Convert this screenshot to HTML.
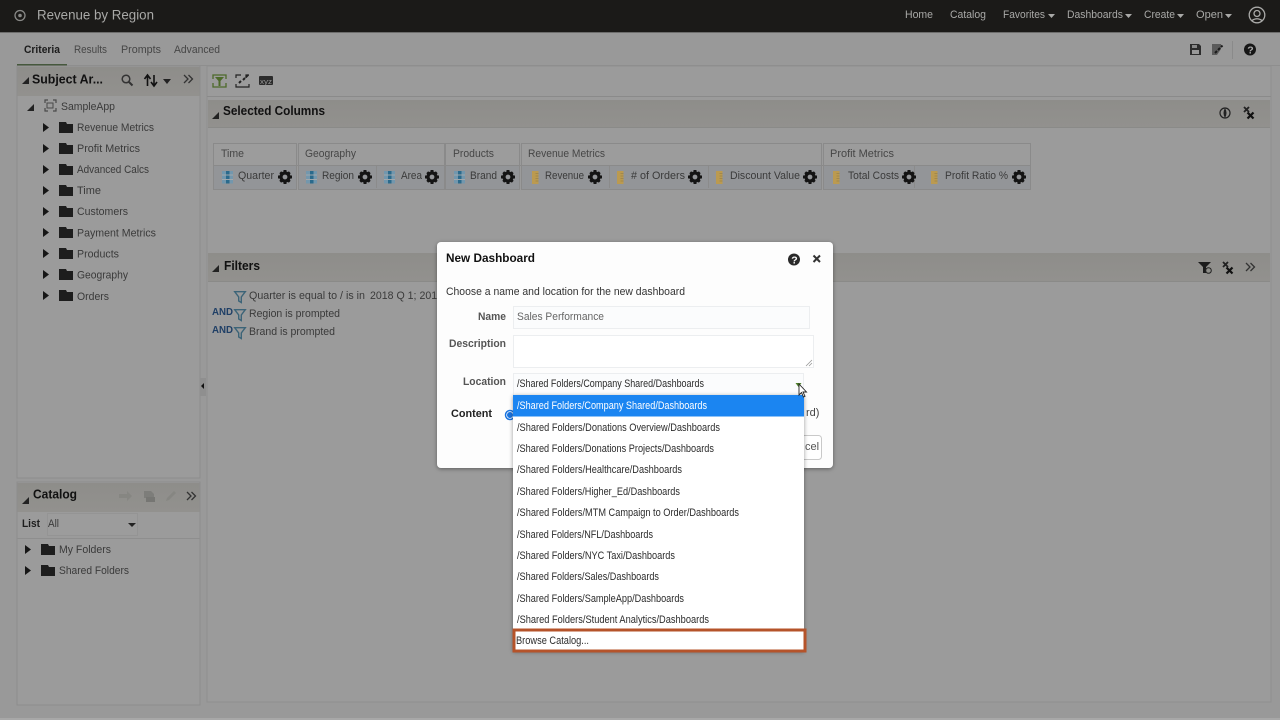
<!DOCTYPE html>
<html><head><meta charset="utf-8"><title>Revenue by Region</title>
<style>
html,body{margin:0;padding:0;width:1280px;height:720px;overflow:hidden;background:#999}
svg{display:block}
text{font-family:"Liberation Sans",sans-serif;font-size:11px;fill:#3a3a3a}
.b{font-weight:bold}
.t{fill:#3a3a3a}
.g{fill:#464646}
.h{fill:#a9a9a7}
.d{fill:#111;font-weight:bold;font-size:13px}
.m{fill:#2c2c2c;font-size:10.8px}
</style></head><body>
<svg width="1280" height="720" viewBox="0 0 1280 720" xmlns="http://www.w3.org/2000/svg">
<defs>
<linearGradient id="ph" x1="0" y1="0" x2="0" y2="1"><stop offset="0" stop-color="#8e8d8a"/><stop offset="1" stop-color="#92918e"/></linearGradient>
<g id="folder"><path d="M0 1h7l1 2h6v9H0z" fill="#1d1d1d"/></g>
<g id="tri"><path d="M0 0l6 4.500-6 4.500z" fill="#161616"/></g>
<g id="open"><path d="M7 0v7H0z" fill="#222"/></g>
<g id="gear"><circle cx="0" cy="0" r="4" fill="none" stroke="#141414" stroke-width="3.200"/><path d="M-1.500-7h3v2.500h-3zM-1.500 4.500h3V7h-3zM-7-1.500h2.500v3H-7zM4.500-1.500H7v3H4.500zM-5.700-3.800l1.900-1.900 1.700 1.700-1.900 1.900zM3.800-5.700l1.900 1.900-1.700 1.700-1.900-1.900zM-3.800 5.700l-1.900-1.900 1.700-1.700 1.900 1.900zM5.700 3.800l-1.900 1.900-1.700-1.700 1.900-1.900z" fill="#141414"/></g>
<g id="attr"><rect x="0" y="0" width="11" height="12.500" fill="#7397ad"/><rect x="4" y="0" width="3.500" height="12.500" fill="#2a6a8c"/><path d="M0 4h11M0 8.500h11" stroke="#a0a8ad" stroke-width="1"/></g>
<g id="meas"><rect x="0" y="0" width="6.500" height="13" fill="#bb9a50"/><path d="M3.500 2.500h3M3.500 5h3M3.500 7.500h3M3.500 10h3" stroke="#9a8248" stroke-width=".7"/></g>
<g id="funnel"><path d="M.7.700h10.600L7.300 6v5.500L4.700 10V6z" fill="none" stroke="#3c6478" stroke-width="1.400"/></g>
<g id="xx"><path d="M1 0l5 5M6 0L1 5" stroke="#222" stroke-width="1.800"/><path d="M4.500 5.500l6 6M10.500 5.500l-6 6" stroke="#111" stroke-width="2.200"/></g>
<g id="chev"><path d="M0 0l4 4-4 4M4.500 0l4 4-4 4" fill="none" stroke="#333" stroke-width="1.300"/></g>
<filter id="sh" x="-5%" y="-5%" width="110%" height="110%"><feDropShadow dx="0" dy="1" stdDeviation="2" flood-color="#000" flood-opacity=".4"/></filter>
</defs>

<rect width="1280" height="720" fill="#999"/>
<rect y="718" width="1280" height="2" fill="#a8a8a8"/>
<!-- header -->
<rect width="1280" height="32" fill="#1b1a18"/>
<rect y="32" width="1280" height="1" fill="#6d6d6c"/>
<circle cx="20" cy="15.500" r="5" fill="none" stroke="#8a8a88" stroke-width="1.300"/><circle cx="20" cy="15.500" r="1.800" fill="#8a8a88"/>
<text x="37" y="19.500" class="h" style="font-size:14px" textLength="117" lengthAdjust="spacingAndGlyphs">Revenue by Region</text>
<text x="905" y="18" class="h" textLength="28" lengthAdjust="spacingAndGlyphs">Home</text>
<text x="950" y="18" class="h" textLength="36" lengthAdjust="spacingAndGlyphs">Catalog</text>
<text x="1003" y="18" class="h" textLength="42" lengthAdjust="spacingAndGlyphs">Favorites</text>
<path d="M1048 14h7l-3.500 4z" fill="#a9a9a7"/>
<text x="1067" y="18" class="h" textLength="56" lengthAdjust="spacingAndGlyphs">Dashboards</text>
<path d="M1125 14h7l-3.500 4z" fill="#a9a9a7"/>
<text x="1144" y="18" class="h" textLength="31" lengthAdjust="spacingAndGlyphs">Create</text>
<path d="M1177 14h7l-3.500 4z" fill="#a9a9a7"/>
<text x="1196" y="18" class="h" textLength="27" lengthAdjust="spacingAndGlyphs">Open</text>
<path d="M1225 14h7l-3.500 4z" fill="#a9a9a7"/>
<circle cx="1257" cy="15" r="7.800" fill="none" stroke="#a9a9a7" stroke-width="1.300"/><circle cx="1257" cy="13.500" r="3" fill="none" stroke="#a9a9a7" stroke-width="1.300"/><path d="M1252 20.500q5-3.500 10 0" fill="none" stroke="#a9a9a7" stroke-width="1.300"/>

<!-- tabs -->
<text x="24" y="53" class="b" style="fill:#1c1c1c" textLength="36" lengthAdjust="spacingAndGlyphs">Criteria</text>
<text x="74" y="53" class="g" textLength="33" lengthAdjust="spacingAndGlyphs">Results</text>
<text x="121" y="53" class="g" textLength="40" lengthAdjust="spacingAndGlyphs">Prompts</text>
<text x="174" y="53" class="g" textLength="46" lengthAdjust="spacingAndGlyphs">Advanced</text>
<rect x="17" y="64" width="50" height="2" fill="#46583d"/>
<rect x="67" y="65" width="1213" height="1" fill="#8e8e8e"/>
<!-- top right tools -->
<path d="M1190 44h9l2 2v9h-11z" fill="#2c2c2c"/><rect x="1192" y="45" width="5" height="3" fill="#888"/><rect x="1192" y="50" width="7" height="4" fill="#999"/>
<path d="M1212 44h9v5l-4 6h-5z" fill="#5a5a5a"/><path d="M1215 53l2-2M1218 50l2-2M1221 47l1.500-1.500" stroke="#1a1a1a" stroke-width="2"/>
<rect x="1232" y="41" width="1" height="18" fill="#8a8a8a"/>
<circle cx="1250" cy="49.500" r="6" fill="#161616"/><text x="1247.300" y="53.500" style="font-size:10.500px;fill:#aaa;font-weight:bold">?</text>

<!-- subject areas panel -->
<rect x="17" y="66" width="183" height="412" fill="#9b9b9b" stroke="#8d8d8d"/>
<rect x="17.500" y="67" width="182" height="29" fill="url(#ph)"/>
<use href="#open" x="22" y="77"/>
<text x="32" y="83.500" class="d" textLength="71" lengthAdjust="spacingAndGlyphs">Subject Ar...</text>
<circle cx="126" cy="79" r="3.800" fill="none" stroke="#333" stroke-width="1.500"/><path d="M129 82l3.500 3.500" stroke="#333" stroke-width="2"/>
<path d="M147.500 86V76M144.500 79l3-4 3 4" fill="none" stroke="#111" stroke-width="1.600"/><path d="M154 75v10M151 82l3 4 3-4" fill="none" stroke="#111" stroke-width="1.600"/>
<path d="M163 79h8l-4 5z" fill="#222"/>
<use href="#chev" x="184" y="75"/>

<use href="#open" x="27" y="104"/>
<path d="M48 100h-3v3M53 100h3v3M48 111h-3v-3M53 111h3v-3" fill="none" stroke="#4a4a4a" stroke-width="1.200"/><rect x="47" y="103" width="6" height="5" fill="none" stroke="#4a4a4a"/>
<text x="61" y="110" class="t" textLength="54" lengthAdjust="spacingAndGlyphs">SampleApp</text>
<use href="#tri" x="43" y="123"/><use href="#folder" x="59" y="121"/><text x="77" y="131" class="t" textLength="77" lengthAdjust="spacingAndGlyphs">Revenue Metrics</text>
<use href="#tri" x="43" y="144"/><use href="#folder" x="59" y="142"/><text x="77" y="152" class="t" textLength="63" lengthAdjust="spacingAndGlyphs">Profit Metrics</text>
<use href="#tri" x="43" y="165"/><use href="#folder" x="59" y="163"/><text x="77" y="173" class="t" textLength="72" lengthAdjust="spacingAndGlyphs">Advanced Calcs</text>
<use href="#tri" x="43" y="186"/><use href="#folder" x="59" y="184"/><text x="77" y="194" class="t" textLength="24" lengthAdjust="spacingAndGlyphs">Time</text>
<use href="#tri" x="43" y="207"/><use href="#folder" x="59" y="205"/><text x="77" y="215" class="t" textLength="51" lengthAdjust="spacingAndGlyphs">Customers</text>
<use href="#tri" x="43" y="228"/><use href="#folder" x="59" y="226"/><text x="77" y="236.500" class="t" textLength="79" lengthAdjust="spacingAndGlyphs">Payment Metrics</text>
<use href="#tri" x="43" y="249"/><use href="#folder" x="59" y="247"/><text x="77" y="257.500" class="t" textLength="42" lengthAdjust="spacingAndGlyphs">Products</text>
<use href="#tri" x="43" y="270"/><use href="#folder" x="59" y="268"/><text x="77" y="278.500" class="t" textLength="51" lengthAdjust="spacingAndGlyphs">Geography</text>
<use href="#tri" x="43" y="291"/><use href="#folder" x="59" y="289"/><text x="77" y="300" class="t" textLength="32" lengthAdjust="spacingAndGlyphs">Orders</text>

<!-- splitter -->
<rect x="200" y="378" width="6" height="18" fill="#8f8f8f"/><path d="M204 383v6l-3-3z" fill="#111"/>

<!-- catalog panel -->
<rect x="17" y="482" width="183" height="223" fill="#9b9b9b" stroke="#8d8d8d"/>
<rect x="17.500" y="483" width="182" height="29" fill="url(#ph)"/>
<use href="#open" x="22" y="497"/>
<text x="33" y="498.500" class="d" textLength="44" lengthAdjust="spacingAndGlyphs">Catalog</text>
<path d="M119 494h8v-3l5 5-5 5v-3h-8z" fill="#868682"/>
<path d="M144 491h7l3 3v4h-10z" fill="#7d7d7a"/><rect x="146" y="497" width="9" height="5" fill="#767673"/>
<path d="M166 501l1-3 7-7 2 2-7 7z" fill="#868682"/>
<use href="#chev" x="187" y="492"/>
<text x="22" y="527" class="b" style="fill:#1d1d1d" textLength="18" lengthAdjust="spacingAndGlyphs">List</text>
<rect x="47.500" y="513.500" width="90" height="22" fill="#9c9c9c" stroke="#949494"/>
<text x="48" y="527" class="t" textLength="11" lengthAdjust="spacingAndGlyphs">All</text>
<path d="M128 523h8l-4 4z" fill="#222"/>
<rect x="17" y="538" width="183" height="1" fill="#8e8e8e"/>
<use href="#tri" x="25" y="545"/><use href="#folder" x="41" y="543"/><text x="59" y="553" class="t" textLength="52" lengthAdjust="spacingAndGlyphs">My Folders</text>
<use href="#tri" x="25" y="566"/><use href="#folder" x="41" y="564"/><text x="59" y="574" class="t" textLength="70" lengthAdjust="spacingAndGlyphs">Shared Folders</text>

<!-- right area -->
<rect x="207" y="66" width="1064" height="636" fill="#9b9b9b" stroke="#8f8f8f"/>
<rect x="207" y="96" width="1064" height="1" fill="#8a8a8a"/>
<!-- toolbar -->
<path d="M213 79v-4h13v4M213 83v4h13v-4" fill="none" stroke="#4d6a2a" stroke-width="1.300"/><path d="M215 77h9l-3.500 4v5h-2v-5z" fill="#4d6a2a"/>
<path d="M236 78v-3h5M249 75h-3v3M236 84v3h13v-3" fill="none" stroke="#222" stroke-width="1.200"/><path d="M239 83l2-2M243 80l2-2M246 77l2-2" stroke="#222" stroke-width="2"/>
<rect x="259" y="76" width="14" height="9" rx="1" fill="#2b2b2b"/><text x="260" y="84" style="font-size:7px;fill:#999" textLength="12" lengthAdjust="spacingAndGlyphs">xyz</text>

<!-- selected columns -->
<rect x="208" y="100" width="1062" height="28" fill="url(#ph)"/>
<rect x="208" y="127" width="1062" height="1" fill="#8a8a88"/>
<use href="#open" x="212" y="112"/>
<text x="223" y="115" class="d" textLength="102" lengthAdjust="spacingAndGlyphs">Selected Columns</text>
<circle cx="1225" cy="113" r="5" fill="none" stroke="#222" stroke-width="1.200"/><path d="M1225 108q-3 5 0 10q3-5 0-10z" fill="#222"/>
<use href="#xx" x="1243" y="107"/>

<!-- columns table -->
<g fill="#9c9c9c" stroke="#8a8a8a">
<rect x="213.500" y="143.500" width="83" height="46"/>
<rect x="298.500" y="143.500" width="146" height="46"/>
<rect x="445.500" y="143.500" width="74" height="46"/>
<rect x="521.500" y="143.500" width="300" height="46"/>
<rect x="823.500" y="143.500" width="207" height="46"/>
</g>
<g fill="#939598">
<rect x="214" y="165" width="82" height="24"/><rect x="299" y="165" width="145" height="24"/><rect x="446" y="165" width="73" height="24"/><rect x="522" y="165" width="299" height="24"/><rect x="824" y="165" width="206" height="24"/>
</g>
<path d="M213.500 165.500h817" stroke="#8a8a8a"/>
<path d="M376.500 166v22M609.500 166v22M708.500 166v22M914.500 166v22" stroke="#8b8b8b"/>
<text x="221" y="157" class="g" textLength="23" lengthAdjust="spacingAndGlyphs">Time</text>
<text x="305" y="157" class="g" textLength="51" lengthAdjust="spacingAndGlyphs">Geography</text>
<text x="453" y="157" class="g" textLength="41" lengthAdjust="spacingAndGlyphs">Products</text>
<text x="528" y="157" class="g" textLength="77" lengthAdjust="spacingAndGlyphs">Revenue Metrics</text>
<text x="830" y="157" class="g" textLength="64" lengthAdjust="spacingAndGlyphs">Profit Metrics</text>

<use href="#attr" x="222" y="171"/><text x="238" y="179" class="t" textLength="36" lengthAdjust="spacingAndGlyphs">Quarter</text><use href="#gear" x="285" y="177"/>
<use href="#attr" x="306" y="171"/><text x="322" y="179" class="t" textLength="32" lengthAdjust="spacingAndGlyphs">Region</text><use href="#gear" x="365" y="177"/>
<use href="#attr" x="384" y="171"/><text x="401" y="179" class="t" textLength="21" lengthAdjust="spacingAndGlyphs">Area</text><use href="#gear" x="432" y="177"/>
<use href="#attr" x="454" y="171"/><text x="470" y="179" class="t" textLength="27" lengthAdjust="spacingAndGlyphs">Brand</text><use href="#gear" x="508" y="177"/>
<use href="#meas" x="532" y="171"/><text x="545" y="179" class="t" textLength="39" lengthAdjust="spacingAndGlyphs">Revenue</text><use href="#gear" x="595" y="177"/>
<use href="#meas" x="617" y="171"/><text x="631" y="179" class="t" textLength="54" lengthAdjust="spacingAndGlyphs"># of Orders</text><use href="#gear" x="695" y="177"/>
<use href="#meas" x="716" y="171"/><text x="730" y="179" class="t" textLength="70" lengthAdjust="spacingAndGlyphs">Discount Value</text><use href="#gear" x="810" y="177"/>
<use href="#meas" x="833" y="171"/><text x="848" y="179" class="t" textLength="51" lengthAdjust="spacingAndGlyphs">Total Costs</text><use href="#gear" x="909" y="177"/>
<use href="#meas" x="931" y="171"/><text x="945" y="179" class="t" textLength="63" lengthAdjust="spacingAndGlyphs">Profit Ratio %</text><use href="#gear" x="1019" y="177"/>

<!-- filters -->
<rect x="208" y="253" width="1062" height="28" fill="url(#ph)"/>
<rect x="208" y="281" width="1062" height="1" fill="#8a8a88"/>
<use href="#open" x="212" y="265"/>
<text x="224" y="270" class="d" textLength="36" lengthAdjust="spacingAndGlyphs">Filters</text>
<path d="M1198 262h13l-5 5v6h-3v-6z" fill="#1c1c1c"/><circle cx="1208.500" cy="270.500" r="2.800" fill="#8f8f8a" stroke="#222"/>
<use href="#xx" x="1222" y="262"/>
<use href="#chev" x="1246" y="263"/>
<use href="#funnel" x="234" y="291"/>
<text x="249" y="299" class="t" textLength="116" lengthAdjust="spacingAndGlyphs">Quarter is equal to / is in</text>
<text x="370" y="299" class="t" textLength="73" lengthAdjust="spacingAndGlyphs">2018 Q 1; 2019</text>
<text x="212" y="315" class="b" style="fill:#1f3f66;font-size:10.500px" textLength="21" lengthAdjust="spacingAndGlyphs">AND</text>
<use href="#funnel" x="234" y="309"/>
<text x="249" y="317" class="t" textLength="91" lengthAdjust="spacingAndGlyphs">Region is prompted</text>
<text x="212" y="333" class="b" style="fill:#1f3f66;font-size:10.500px" textLength="21" lengthAdjust="spacingAndGlyphs">AND</text>
<use href="#funnel" x="234" y="327"/>
<text x="249" y="335" class="t" textLength="86" lengthAdjust="spacingAndGlyphs">Brand is prompted</text>

<!-- dialog -->
<rect x="437" y="242" width="396" height="226" rx="4" fill="#fdfdfd" filter="url(#sh)"/>
<text x="446" y="262" class="d" style="font-size:12px;fill:#111" textLength="89" lengthAdjust="spacingAndGlyphs">New Dashboard</text>
<circle cx="794" cy="259.500" r="6" fill="#2a2a2a"/><text x="791.200" y="263.500" style="font-size:10.500px;fill:#fff;font-weight:bold">?</text>
<path d="M813.500 255.500l6.500 6.500M820 255.500l-6.500 6.500" stroke="#333" stroke-width="2"/>
<text x="446" y="295" style="fill:#333" textLength="239" lengthAdjust="spacingAndGlyphs">Choose a name and location for the new dashboard</text>
<text x="478" y="320" class="b" style="fill:#555" textLength="28" lengthAdjust="spacingAndGlyphs">Name</text>
<rect x="513.500" y="306.500" width="296" height="22" fill="#fbfcfd" stroke="#eceef0"/>
<text x="517" y="320" style="fill:#666" textLength="87" lengthAdjust="spacingAndGlyphs">Sales Performance</text>
<text x="449" y="347" class="b" style="fill:#555" textLength="57" lengthAdjust="spacingAndGlyphs">Description</text>
<rect x="513.500" y="335.500" width="300" height="32" fill="#fff" stroke="#eceef0"/>
<path d="M812 360l-6 6M812 363l-3 3" stroke="#999" stroke-width=".8"/>
<text x="463" y="385" class="b" style="fill:#555" textLength="43" lengthAdjust="spacingAndGlyphs">Location</text>
<rect x="513.500" y="373.500" width="290" height="22" fill="#fbfcfd" stroke="#eceef0"/>
<text x="517" y="387" class="m" textLength="187" lengthAdjust="spacingAndGlyphs">/Shared Folders/Company Shared/Dashboards</text>
<path d="M795.500 383h6l-3 4z" fill="#4f7f2a"/>
<text x="451" y="417" class="b" style="fill:#222" textLength="41" lengthAdjust="spacingAndGlyphs">Content</text>
<circle cx="510" cy="415" r="4.500" fill="#fff" stroke="#1a74e0" stroke-width="1.500"/><circle cx="510" cy="415" r="3" fill="#1a74e0"/>
<text x="806" y="416" style="fill:#444">rd)</text>
<rect x="780.500" y="435.500" width="41" height="24" rx="3" fill="#fff" stroke="#c9c9c9"/>
<text x="805" y="450" style="fill:#555">cel</text>

<!-- dropdown -->
<rect x="513" y="395" width="291" height="256" fill="#fff" filter="url(#sh)"/>
<rect x="513" y="395" width="291" height="21.500" fill="#1b85f1"/>
<text x="517" y="409" class="m" style="fill:#fff" textLength="190" lengthAdjust="spacingAndGlyphs">/Shared Folders/Company Shared/Dashboards</text>
<text x="517" y="431" class="m" textLength="203" lengthAdjust="spacingAndGlyphs">/Shared Folders/Donations Overview/Dashboards</text>
<text x="517" y="452" class="m" textLength="197" lengthAdjust="spacingAndGlyphs">/Shared Folders/Donations Projects/Dashboards</text>
<text x="517" y="473" class="m" textLength="165" lengthAdjust="spacingAndGlyphs">/Shared Folders/Healthcare/Dashboards</text>
<text x="517" y="495" class="m" textLength="163" lengthAdjust="spacingAndGlyphs">/Shared Folders/Higher_Ed/Dashboards</text>
<text x="517" y="516" class="m" textLength="222" lengthAdjust="spacingAndGlyphs">/Shared Folders/MTM Campaign to Order/Dashboards</text>
<text x="517" y="538" class="m" textLength="136" lengthAdjust="spacingAndGlyphs">/Shared Folders/NFL/Dashboards</text>
<text x="517" y="559" class="m" textLength="158" lengthAdjust="spacingAndGlyphs">/Shared Folders/NYC Taxi/Dashboards</text>
<text x="517" y="580" class="m" textLength="142" lengthAdjust="spacingAndGlyphs">/Shared Folders/Sales/Dashboards</text>
<text x="517" y="602" class="m" textLength="167" lengthAdjust="spacingAndGlyphs">/Shared Folders/SampleApp/Dashboards</text>
<text x="517" y="623" class="m" textLength="192" lengthAdjust="spacingAndGlyphs">/Shared Folders/Student Analytics/Dashboards</text>
<rect x="514" y="630" width="291" height="21" fill="#fff" stroke="#b5532a" stroke-width="3"/>
<text x="516" y="644" class="m" textLength="73" lengthAdjust="spacingAndGlyphs">Browse Catalog...</text>

<!-- cursor -->
<path d="M799 384v11l2.500-2.500 2 4.500 1.500-.7-2-4.300h3.500z" fill="#fff" stroke="#222" stroke-width=".9"/>
</svg>
</body></html>
